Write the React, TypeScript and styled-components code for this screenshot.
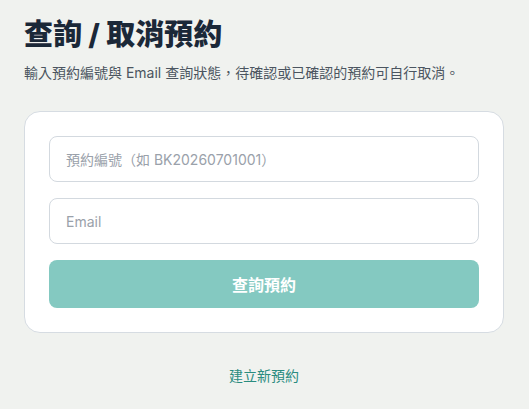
import styled, { createGlobalStyle } from "styled-components";

const GlobalStyle = createGlobalStyle`
  html, body {
    margin: 0;
    padding: 0;
    background: #f0f2ef;
  }
  body {
    font-family: Inter, "Noto Sans CJK TC", "Noto Sans", sans-serif;
  }
  * {
    box-sizing: border-box;
  }
`;

const App = () => {
  return (
    <>
      <GlobalStyle />
      <Page>
        <Title>查詢 / 取消預約</Title>
        <Subtitle>
          輸入預約編號與 Email 查詢狀態，待確認或已確認的預約可自行取消。
        </Subtitle>
        <Card>
          <Field placeholder="預約編號（如 BK20260701001）" />
          <Field placeholder="Email" type="email" />
          <SubmitButton type="button">查詢預約</SubmitButton>
        </Card>
        <Footer>
          <NewLink href="#">建立新預約</NewLink>
        </Footer>
      </Page>
    </>
  );
};
export default App;

const Page = styled.div`
  padding: 17px 25px 0 24px;
  display: flex;
  flex-direction: column;
`;

const Title = styled.h1`
  margin: 0;
  font-size: 29px;
  line-height: 36px;
  font-weight: 800;
  color: #1b2838;
`;

const Subtitle = styled.p`
  margin: 10px 0 0;
  font-size: 14px;
  line-height: 20px;
  color: #4b5560;
`;

const Card = styled.div`
  margin-top: 28px;
  background: #ffffff;
  border: 1px solid #d6dce2;
  border-radius: 16px;
  padding: 24px;
  display: flex;
  flex-direction: column;
  gap: 16px;
`;

const Field = styled.input`
  height: 46px;
  width: 100%;
  border: 1px solid #d3d9df;
  border-radius: 8px;
  padding: 0 16px;
  font-family: inherit;
  font-size: 14px;
  color: #1b2838;
  background: #ffffff;
  outline: none;

  &::placeholder {
    color: #9aa1aa;
  }
`;

const SubmitButton = styled.button`
  height: 48px;
  border: none;
  border-radius: 8px;
  background: #84c9c1;
  color: #ffffff;
  font-family: inherit;
  font-size: 16px;
  font-weight: 700;
  cursor: pointer;
`;

const Footer = styled.div`
  margin-top: 33px;
  display: flex;
  justify-content: center;
`;

const NewLink = styled.a`
  font-size: 14px;
  line-height: 20px;
  color: #2a8c7f;
  text-decoration: none;
`;
